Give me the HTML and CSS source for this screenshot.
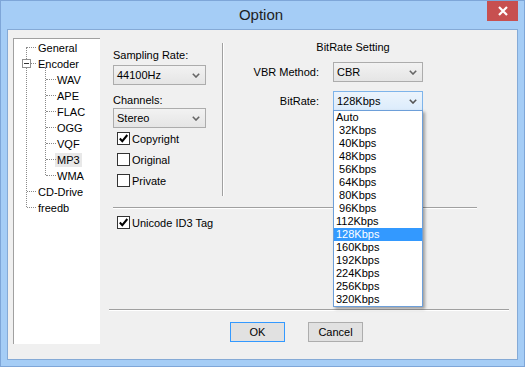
FILE: index.html
```html
<!DOCTYPE html>
<html lang="en">
<head>
    <meta charset="UTF-8">
    <title>Option</title>
    <link rel="stylesheet" href="styles.css">
</head>
<body>
    <div class="window">
        <div class="titlebar">
            <span></span>
            <div class="title">Option</div>
            <div class="close-btn">
                <svg width="10" height="10" viewBox="0 0 10 10"><path d="M1 1 L9 9 M9 1 L1 9" stroke="#fff" stroke-width="2.2" fill="none"/></svg>
            </div>
        </div>
        <div class="client">
            <div class="tree">
                <ul class="tree-root">
                    <li><div class="row"><span class="label">General</span></div></li>
                    <li>
                        <div class="row"><span class="toggle"></span><span class="label">Encoder</span></div>
                        <ul class="tree-sub">
                            <li><div class="row"><span class="label">WAV</span></div></li>
                            <li><div class="row"><span class="label">APE</span></div></li>
                            <li><div class="row"><span class="label">FLAC</span></div></li>
                            <li><div class="row"><span class="label">OGG</span></div></li>
                            <li><div class="row"><span class="label">VQF</span></div></li>
                            <li><div class="row"><span class="label selected">MP3</span></div></li>
                            <li><div class="row"><span class="label">WMA</span></div></li>
                        </ul>
                    </li>
                    <li><div class="row"><span class="label">CD-Drive</span></div></li>
                    <li><div class="row"><span class="label">freedb</span></div></li>
                </ul>
            </div>
            <div class="main">
                <div class="settings">
                    <div class="audio-col">
                        <div class="field-label">Sampling Rate:</div>
                        <div class="combo">
                            <span>44100Hz</span>
                            <svg class="chevron" width="8" height="5" viewBox="0 0 8 5"><path d="M0.8 0.8 L4 4 L7.2 0.8" stroke="#666" stroke-width="1.6" fill="none"/></svg>
                        </div>
                        <div class="field-label channels">Channels:</div>
                        <div class="combo">
                            <span>Stereo</span>
                            <svg class="chevron" width="8" height="5" viewBox="0 0 8 5"><path d="M0.8 0.8 L4 4 L7.2 0.8" stroke="#666" stroke-width="1.6" fill="none"/></svg>
                        </div>
                        <div class="check">
                            <span class="box"><svg width="11" height="11" viewBox="0 0 11 11"><path d="M1.8 5.5 L4.3 8.2 L9.3 2" stroke="#000" stroke-width="2" fill="none"/></svg></span>
                            Copyright
                        </div>
                        <div class="check"><span class="box"></span>Original</div>
                        <div class="check"><span class="box"></span>Private</div>
                    </div>
                    <div class="vsep"></div>
                    <div class="bitrate-col">
                        <div class="group-title">BitRate Setting</div>
                        <div class="form-grid">
                            <span class="grid-label">VBR Method:</span>
                            <div class="combo">
                                <span>CBR</span>
                                <svg class="chevron" width="8" height="5" viewBox="0 0 8 5"><path d="M0.8 0.8 L4 4 L7.2 0.8" stroke="#666" stroke-width="1.6" fill="none"/></svg>
                            </div>
                            <span class="grid-label">BitRate:</span>
                            <div class="combo focused">
                                <span>128Kbps</span>
                                <svg class="chevron" width="8" height="5" viewBox="0 0 8 5"><path d="M0.8 0.8 L4 4 L7.2 0.8" stroke="#555" stroke-width="1.6" fill="none"/></svg>
                                <ul class="droplist">
                                    <li>Auto</li>
                                    <li> 32Kbps</li>
                                    <li> 40Kbps</li>
                                    <li> 48Kbps</li>
                                    <li> 56Kbps</li>
                                    <li> 64Kbps</li>
                                    <li> 80Kbps</li>
                                    <li> 96Kbps</li>
                                    <li>112Kbps</li>
                                    <li class="active">128Kbps</li>
                                    <li>160Kbps</li>
                                    <li>192Kbps</li>
                                    <li>224Kbps</li>
                                    <li>256Kbps</li>
                                    <li>320Kbps</li>
                                </ul>
                            </div>
                        </div>
                    </div>
                </div>
                <div class="hsep"></div>
                <div class="check unicode">
                    <span class="box"><svg width="11" height="11" viewBox="0 0 11 11"><path d="M1.8 5.5 L4.3 8.2 L9.3 2" stroke="#000" stroke-width="2" fill="none"/></svg></span>
                    Unicode ID3 Tag
                </div>
                <div class="bottom-sep"></div>
                <div class="buttons">
                    <button class="btn default">OK</button>
                    <button class="btn">Cancel</button>
                </div>
            </div>
        </div>
    </div>
</body>
</html>
```

FILE: styles.css
```css
* {
    box-sizing: border-box;
}
body {
    margin: 0;
    background: #a5cdf6;
    font-family: 'Liberation Sans', Arial, sans-serif;
    font-size: 11px;
    color: #000;
}
.window {
    width: 525px;
    height: 367px;
    background: #a5cdf6;
    border: 1px solid #7ea6d8;
    padding: 0 6px 6px 6px;
}
.titlebar {
    height: 28px;
    display: grid;
    grid-template-columns: 1fr auto 1fr;
}
.title {
    font-size: 15px;
    color: #1e1e1e;
    line-height: 28px;
    padding-right: 3px;
}
.close-btn {
    justify-self: end;
    width: 31px;
    height: 20px;
    background: #c75050;
    display: flex;
    align-items: center;
    justify-content: center;
}
.client {
    height: 331px;
    background: #f0f0f0;
    border: 1px solid #85aad6;
    display: flex;
    padding: 8px 0 0 5px;
}

/* tree */
.tree {
    width: 87px;
    height: 306px;
    background: #fff;
    border-top: 1px solid #a0a0a0;
    border-left: 1px solid #a0a0a0;
}
.tree ul {
    list-style: none;
    margin: 0;
    padding: 0;
    position: relative;
}
.tree-root::before {
    content: '';
    position: absolute;
    left: 12px;
    top: 8px;
    bottom: 8px;
    border-left: 1px dotted #8a8a8a;
}
.tree-sub::before {
    content: '';
    position: absolute;
    left: 31px;
    top: -4px;
    bottom: 8px;
    border-left: 1px dotted #8a8a8a;
}
.row {
    position: relative;
    height: 16px;
    line-height: 16px;
    padding-left: 22px;
    white-space: nowrap;
}
.row::before {
    content: '';
    position: absolute;
    left: 13px;
    top: 8px;
    width: 9px;
    border-top: 1px dotted #8a8a8a;
}
.tree-sub .row {
    padding-left: 41px;
}
.tree-sub .row::before {
    left: 32px;
    width: 10px;
}
.label {
    display: inline-block;
    line-height: 14px;
    padding: 0 2px;
    vertical-align: middle;
}
.label.selected {
    background: #e8e8e8;
}
.toggle {
    position: absolute;
    left: 8px;
    top: 4px;
    width: 9px;
    height: 9px;
    background: #fff;
    border: 1px solid #8f8f8f;
    z-index: 1;
}
.toggle::after {
    content: '';
    position: absolute;
    left: 1px;
    top: 3px;
    width: 5px;
    border-top: 1px solid #333;
}

/* main area */
.main {
    margin-left: 9px;
    width: 400px;
}
.settings {
    height: 169px;
    display: flex;
}
.audio-col {
    margin-left: 4px;
    width: 93px;
}
.field-label {
    margin-top: 10px;
    line-height: 14px;
    margin-bottom: 3px;
}
.field-label.channels {
    margin-top: 8px;
    margin-bottom: 1px;
}
.combo {
    position: relative;
    height: 20px;
    border: 1px solid #acacac;
    background: linear-gradient(#f2f2f2, #e5e5e5);
    display: flex;
    align-items: center;
    justify-content: space-between;
    padding: 0 5px 0 3px;
}
.combo.focused {
    border-color: #7eb4ea;
    background: linear-gradient(#ecf4fc, #dcecfc);
}
.check {
    height: 21px;
    display: flex;
    align-items: center;
    padding-left: 4px;
    gap: 2px;
}
.audio-col .check:first-of-type {
    margin-top: 1px;
}
.box {
    width: 13px;
    height: 13px;
    border: 1px solid #333;
    background: #fff;
    display: flex;
    align-items: center;
    justify-content: center;
    flex-shrink: 0;
}
.vsep {
    margin: 5px 0 0 16px;
    height: 153px;
    border-left: 1px solid #a0a0a0;
    border-right: 1px solid #fff;
}
.bitrate-col {
    width: 258px;
}
.group-title {
    text-align: center;
    line-height: 14px;
    margin-top: 2px;
}
.form-grid {
    margin-top: 8px;
    display: grid;
    grid-template-columns: 95px 90px;
    column-gap: 14px;
    row-gap: 9px;
}
.grid-label {
    text-align: right;
    align-self: center;
}
.droplist {
    position: absolute;
    top: 100%;
    left: -1px;
    width: 90px;
    margin: 0;
    padding: 0;
    list-style: none;
    background: #fff;
    border: 1px solid #6d9fd9;
    box-shadow: 2px 2px 3px rgba(0, 0, 0, 0.35);
    z-index: 5;
}
.droplist li {
    height: 13px;
    line-height: 13px;
    padding-left: 2px;
    white-space: pre;
}
.droplist li.active {
    background: #3399ff;
    color: #fff;
}
.hsep {
    margin-left: 4px;
    width: 364px;
    border-top: 1px solid #a0a0a0;
    border-bottom: 1px solid #fff;
}
.check.unicode {
    margin-top: 3px;
    padding-left: 8px;
}
.bottom-sep {
    margin-top: 76px;
    border-top: 1px solid #a0a0a0;
    border-bottom: 1px solid #fff;
}
.buttons {
    margin-top: 11px;
    padding-left: 121px;
    display: flex;
    gap: 23px;
}
.btn {
    width: 55px;
    height: 20px;
    font-family: inherit;
    font-size: 11px;
    color: #000;
    background: #e1e1e1;
    border: 1px solid #adadad;
    padding: 0;
}
.btn.default {
    border-color: #3399ff;
}
```
